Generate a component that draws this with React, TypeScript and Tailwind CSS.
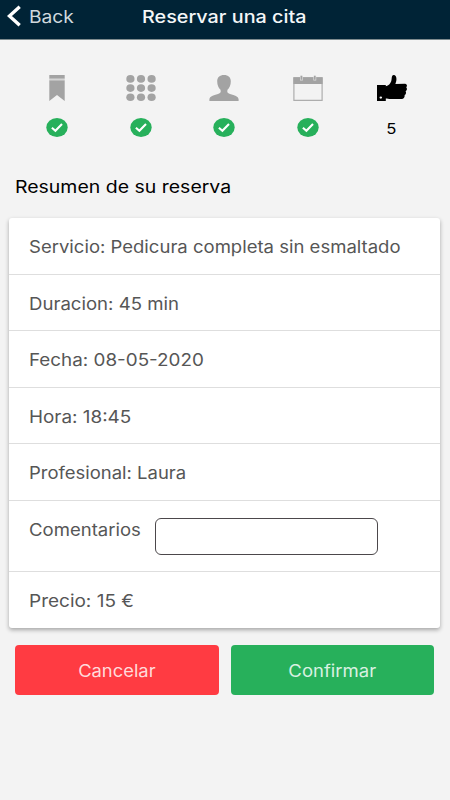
import React from 'react';

const details = [
  { text: 'Servicio: Pedicura completa sin esmaltado', stretch: 'scale-x-[1.089]' },
  { text: 'Duracion: 45 min', stretch: 'scale-x-[1.093]' },
  { text: 'Fecha: 08-05-2020', stretch: 'scale-x-[1.108]' },
  { text: 'Hora: 18:45', stretch: 'scale-x-[1.11]' },
  { text: 'Profesional: Laura', stretch: 'scale-x-[1.086]' },
];

function Check() {
  return (
    <svg className="h-[19px] w-[22px]" viewBox="0 0 22 19">
      <ellipse cx="11" cy="9.5" rx="10.7" ry="9.4" fill="#27b05b" />
      <path d="M5.9 9.7 L9.4 12.7 L16 6" fill="none" stroke="#fff" strokeWidth="2.1" />
    </svg>
  );
}

function Bookmark() {
  return (
    <svg className="h-[26px] w-[30px]" viewBox="0 0 30 26" fill="#a3a3a3">
      <path d="M7.3 0H22.7V3.8H7.3ZM7.3 5.2H22.7V26L15 20L7.3 26Z" />
      <path d="M7.3 3.8H22.7V5.2H7.3Z" fill="#d4d4d4" />
    </svg>
  );
}

function Dots() {
  return (
    <svg className="h-[26px] w-[30px]" viewBox="0 0 30 26" fill="#a3a3a3">
      {[3.9, 13.1, 22.2].map((y) =>
        [4.4, 15, 25.6].map((x) => <ellipse key={`${x}-${y}`} cx={x} cy={y} rx="4.1" ry="3.8" />),
      )}
    </svg>
  );
}

function Person() {
  return (
    <svg className="h-[26px] w-[30px]" viewBox="0 0 30 26" fill="#a3a3a3">
      <path d="M15 0C19.3 0 21.8 2.4 21.8 6.2C21.8 10 20.5 12.8 18.5 14.8C17.8 17.3 18.5 18.2 21 19C25.8 20.4 29.2 21.3 29.6 24.2V26H.4V24.2C.8 21.3 4.2 20.4 9 19C11.5 18.2 12.2 17.3 11.5 14.8C9.5 12.8 8.2 10 8.2 6.2C8.2 2.4 10.7 0 15 0Z" />
    </svg>
  );
}

function Calendar() {
  return (
    <svg className="h-[26px] w-[30px]" viewBox="0 0 30 26">
      <path d="M.9 2.8H29.1V25.4H.9Z" fill="none" stroke="#adadad" strokeWidth="1.2" />
      <path d="M.4 2.3H29.6V9H.4Z" fill="#a3a3a3" />
      <path d="M8.4 .8V5.5M21.8 .8V5.5" stroke="#dedede" strokeWidth="2.8" />
      <path d="M8.4 .8V4.8M21.8 .8V4.8" stroke="#a3a3a3" strokeWidth="1.6" />
    </svg>
  );
}

function Thumb() {
  return (
    <svg className="h-[26px] w-[30px]" viewBox="0 0 30 26">
      <path d="M0 10H8.8V11.2C11.8 10.7 13.2 8.6 14.2 6.2C15.1 4 14.2 .2 16.6 0C19.4 0 19.8 3.2 19.2 6.2L18.4 9L28 8.7C30.3 9 30.4 11.4 29.2 12.2C30.4 13.4 30 15.6 28.6 16.2C29.5 17.8 28.8 19.5 27.6 20C28 22.3 26.7 23.8 24.8 24H14C11.5 24 10.3 23.6 8.8 23.5V26H0Z" fill="#000" />
      <ellipse cx="3.8" cy="22.6" rx="1.3" ry="1.1" fill="#f3f3f3" />
    </svg>
  );
}

export default function App() {
  return (
    <div className="h-[800px] w-[450px] overflow-hidden bg-[#f3f3f3] font-['Inter',sans-serif] text-[17px] text-[#565656]">
      <header className="grid h-[40px] grid-cols-[142px_166px_142px] border-b border-[#7e8b8e] bg-[#002336] text-[#f4f7f8]">
        <div className="flex h-8 items-center pl-[7px]">
          <svg className="h-[22px] w-[14px]" viewBox="0 0 14 22">
            <path d="M12.7 1.7L2.4 11L12.7 20.3" fill="none" stroke="#fff" strokeWidth="3.4" />
          </svg>
          <span className="ml-[8px] mt-[3px] origin-left scale-x-[1.13] whitespace-nowrap text-[#d0d9de]">Back</span>
        </div>
        <h1 className="flex h-8 items-center whitespace-nowrap font-medium">
          <span className="mt-[3px] origin-left scale-x-[1.163]">Reservar una cita</span>
        </h1>
      </header>

      <nav className="grid grid-cols-5 pl-[15px] pr-[16.25px] pt-[35px]">
        {[Bookmark, Dots, Person, Calendar, Thumb].map((Icon, i) => (
          <div key={i} className="flex flex-col items-center">
            <Icon />
            <div className="mt-[17px] flex h-[19px] items-center justify-center">
              {i < 4 ? <Check /> : <span className="mt-[2px] scale-x-[1.15] text-[14.5px] text-black">5</span>}
            </div>
          </div>
        ))}
      </nav>

      <h2 className="mt-[38px] flex h-6 items-center pl-[15px] pt-[2px] text-black">
        <span className="origin-left scale-x-[1.145] whitespace-nowrap">Resumen de su reserva</span>
      </h2>

      <section className="mr-[10px] ml-[9px] mt-[19px] rounded-[3px] bg-white shadow-[0_2px_4px_rgba(0,0,0,0.32)]">
        {details.map((d) => (
          <div key={d.text} className="flex h-[56.5px] items-center border-b border-[#dedede] pl-[19.5px] pt-[4px]">
            <span className={`origin-left whitespace-nowrap ${d.stretch}`}>{d.text}</span>
          </div>
        ))}
        <div className="flex h-[71.25px] items-start border-b border-[#dedede] pl-[19.5px] pt-[17px]">
          <div className="w-[126.5px]">
            <span className="inline-block origin-left scale-x-[1.09]">Comentarios</span>
          </div>
          <input aria-label="Comentarios" className="h-[37px] w-[222.5px] rounded-[6px] border-[1.5px] border-[#4c484b] bg-white px-2 outline-none" />
        </div>
        <div className="flex h-[56.25px] items-center pl-[19.5px] pt-[4px]">
          <span className="origin-left scale-x-[1.117]">Precio: 15 €</span>
        </div>
      </section>

      <div className="mt-[16.5px] flex gap-3 px-[15px]">
        <button className="h-[50px] w-[204px] rounded-[4px] bg-[#ff3b42] pt-[4px] text-[#ffdadb]">
          <span className="inline-block scale-x-[1.08]">Cancelar</span>
        </button>
        <button className="h-[50px] w-[203px] rounded-[4px] bg-[#27b05b] pt-[4px] text-[#d8f1e1]">
          <span className="inline-block scale-x-[1.09]">Confirmar</span>
        </button>
      </div>
    </div>
  );
}
